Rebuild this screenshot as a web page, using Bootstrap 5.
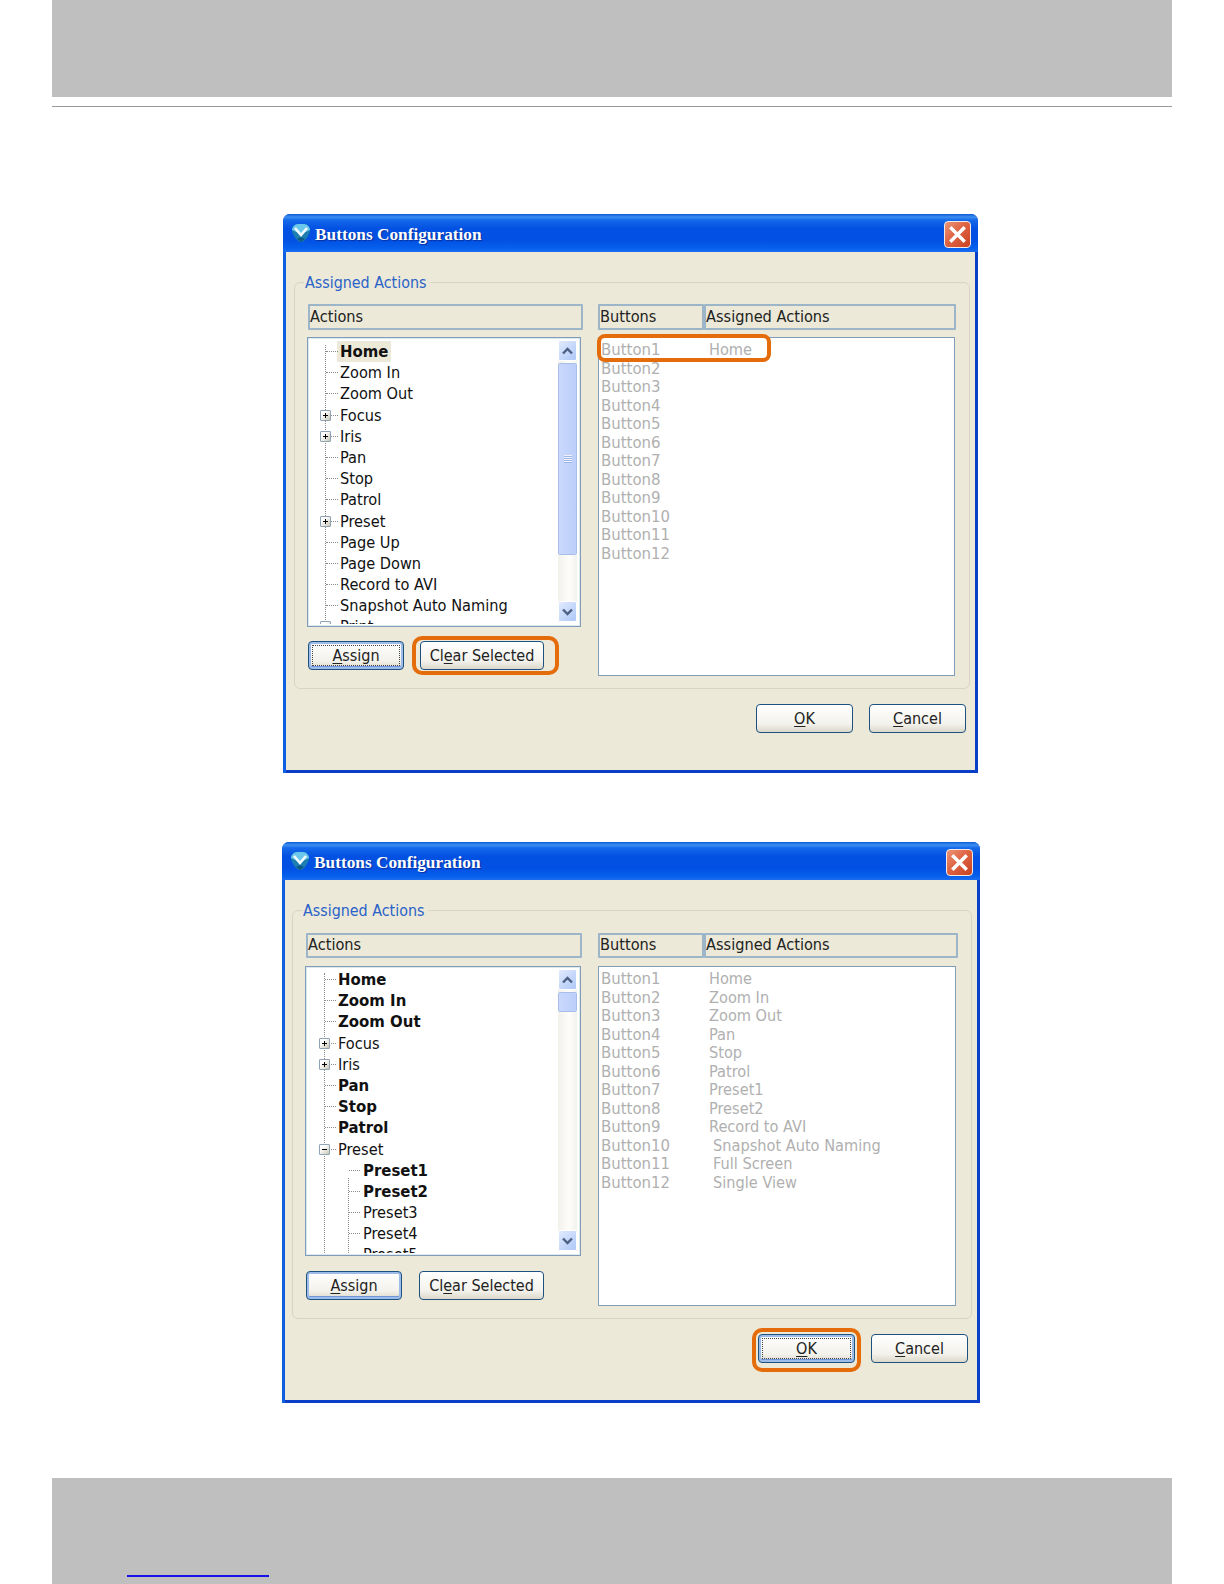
<!doctype html>
<html lang="en">
<head>
<meta charset="utf-8">
<title>Buttons Configuration</title>
<link rel="stylesheet" href="https://cdn.jsdelivr.net/npm/bootstrap@5.3.0/dist/css/bootstrap.min.css">
<style>
html,body{margin:0;background:#fff;}
body{width:1224px;height:1584px;overflow:hidden;font-family:"DejaVu Sans Condensed","DejaVu Sans",sans-serif;font-stretch:condensed;}
.graybar{background:#bfbfbf;width:1120px;margin-left:52px;}
.graytop{height:97px;}
.rule{height:1px;background:#999;width:1120px;margin:9px 0 0 52px;}
.grayfoot{height:106px;margin-top:75px;position:relative;}
.footlink{display:block;width:142px;height:2px;background:#1414e6;margin-left:75px;transform:translateY(97px);}
.xpwin{background:#ece9d8;border-radius:7px 7px 0 0;box-shadow:inset 3px 0 0 #0f5fe2,inset -3px 0 0 #0a3fc8,inset 0 -3px 0 #0a3ec6;}
.win-a{width:695px;height:559px;margin:107px 0 0 283px;--gl:11px;--gt:30px;--gw:676px;--pl:13px;--pt:21px;--lw:275px;--rw:358px;--cg:15px;--hh:26px;--hg:7px;--th:290px;--tw:274px;--tm:-1px;--lh:339px;--lw2:357px;--bw2:252px;--bm:14px;--cm:16px;}
.win-b{width:698px;height:561px;margin:69px 0 0 282px;--gl:10px;--gt:30px;--gw:680px;--pl:13px;--pt:22px;--lw:276px;--rw:360px;--cg:16px;--hh:25px;--hg:8px;--th:290px;--tw:276px;--tm:-1px;--lh:340px;--lw2:358px;--bw2:254px;--bm:15px;--cm:17px;}
.xptitle{height:38px;border-radius:7px 7px 0 0;background:linear-gradient(180deg,#0a5ad8 0,#3d8ff0 8%,#1469ea 16%,#0351e2 38%,#0251e4 70%,#0660ec 90%,#1c6df0 100%);padding:0 7px 0 7px;}
.xpname{font-family:"Liberation Serif",serif;font-stretch:normal;font-weight:700;font-size:17.3px;color:#fff;text-shadow:1px 1px 1px #0b2e9a;margin-left:3px;line-height:1;padding-top:4px;}
.xpclose{width:27px;height:27px;border:1px solid #f4ebe6;border-radius:4px;background:linear-gradient(135deg,#ec9678 0,#de6444 45%,#c9421f 100%);padding:0;margin-top:3px;}
.xpgroup{margin:var(--gt) 0 0 var(--gl);width:var(--gw);border:1px solid #d8d5c4;border-radius:6px;padding:var(--pt) 0 12px var(--pl);position:relative;}
.xplegend{position:absolute;left:9px;top:-10px;background:#ece9d8;padding:0 4px 0 1px;color:#2a62c8;font-size:15.9px;line-height:20px;}
.xpcols{display:grid;grid-template-columns:var(--lw) var(--rw);column-gap:var(--cg);}
.xphead{height:var(--hh);border:2px solid #9db5c9;border-radius:1px;background:#ece9d8;color:#222;font-size:16.2px;line-height:calc(var(--hh) - 5px);margin-bottom:var(--hg);}
.headtwo{display:grid;grid-template-columns:106px var(--bw2);}
.xptree{width:var(--tw);height:var(--th);margin-left:var(--tm);border:1px solid #7f9db9;box-shadow:inset 0 0 0 1px #dfe7ee;background:#fff;}
.treebody{padding-top:3px;padding-bottom:2px;}
.win-b .treebody{padding-top:2px;}
.treeclip{height:100%;position:relative;overflow:hidden;}
.vline{position:absolute;left:17px;top:4px;bottom:0;border-left:1px dotted #8a8a8a;}
.vline2{position:absolute;left:42px;top:209px;bottom:0;border-left:1px dotted #8a8a8a;}
.tnode{height:21.2px;line-height:21.2px;font-size:16.2px;color:#111;padding-left:32px;position:relative;white-space:nowrap;}
.win-b .tnode{padding-left:32px;}
.win-b .vline{left:18px;}
.tnode::before{content:"";position:absolute;left:18px;top:10px;width:12px;border-top:1px dotted #8a8a8a;}
.win-b .tnode::before{left:19px;width:11px;}
.win-b .tnode.tkid{padding-left:57px;}
.win-b .tnode.tkid::before{left:43px;width:11px;}
.tbold{font-weight:700;font-size:16.6px;}
.thome{display:inline-block;background:#ece9d8;padding:0 3px;margin-left:-3px;}
.texp{position:absolute;left:12px;top:5px;width:11px;height:11px;border:1px solid #8fa3b5;border-radius:1px;background:linear-gradient(135deg,#fff 30%,#c9c5b4 100%);z-index:1;}
.win-b .texp{left:13px;}
.texp::before{content:"";position:absolute;left:2px;top:4px;width:5px;height:1px;background:#000;}
.texp.tplus::after{content:"";position:absolute;left:4px;top:2px;width:1px;height:5px;background:#000;}
.xpscroll{width:19px;flex:0 0 19px;margin:2px 3px 4px 0;background:linear-gradient(90deg,#f3f1ec,#fdfdfb 60%,#f3f1ec);}
.sbtn{height:21px;flex:0 0 21px;border:1px solid #fff;border-radius:2px;background:linear-gradient(135deg,#e1eafe,#aec8f7);}
.sthumb{border:1px solid #fff;outline:1px solid #a8bde8;outline-offset:-1px;border-radius:2px;background:linear-gradient(90deg,#c9d8fc,#bccefa);}
.win-a .sthumb{height:192px;margin-top:2px;}
.win-b .sthumb{height:20px;margin-top:2px;}
.sgrip{width:8px;height:8px;background:repeating-linear-gradient(180deg,#eef3fe 0 1px,#9eb6e8 1px 2px);}
.xpbtns{margin-top:var(--bm);display:flex;}
.xpbtn{height:29px;padding:0;border:1px solid #1c5180;border-radius:4px;background:linear-gradient(180deg,#fff 0,#f3f2ec 70%,#dcd8ca 100%);color:#222;font-size:16px;line-height:25px;--bs-btn-padding-y:0;position:relative;}
.xpbtn:hover{background:linear-gradient(180deg,#fff 0,#f3f2ec 70%,#dcd8ca 100%);border-color:#1c5180;color:#222;}
.xpbtn u{text-underline-offset:2px;}
.bw-assign{width:96px;}
.bw-clear{width:124px;margin-left:var(--cm);}
.win-b .bw-clear{width:125px;}
.bw-ok{width:97px;}
.bw-cancel{width:97px;margin-left:16px;}
.bdefault{box-shadow:inset 0 0 0 2px #9ebce8,inset 0 -1px 0 2px #6f96dc;}
.bfocus::after{content:"";position:absolute;inset:3px;border:1px dotted #444;}
.xplist{width:var(--lw2);height:var(--lh);border:1px solid #7f9db9;background:#fff;padding:3px 0 0 2px;position:relative;}
.lrow{height:18.55px;line-height:18.55px;font-size:16.2px;color:#b0b0b0;white-space:nowrap;display:flex;}
.lkey{width:108px;font-size:16.6px;}
.lkey + .lshift{margin-left:4px;}
.oring{position:absolute;border:4.5px solid #e46c0a;border-radius:10px;pointer-events:none;}
.ring-clear{inset:-5px -15px -5px -8px;}
.ring-row{left:-2px;top:-4px;width:174px;height:28px;border-radius:8px;}
.ring-ok{inset:-6px -6px -9px -6px;}
.holder{display:inline-block;position:relative;line-height:0;}
.footrow{margin:15px 12px 0 0;}
</style>
</head>
<body>
<div class="graybar graytop"></div>
<div class="rule"></div>

<section class="xpwin win-a">
  <div class="xptitle d-flex align-items-center">
    <svg width="22" height="22" viewBox="0 0 22 22" aria-hidden="true"><path d="M2 8C2 5 5 2 8 2h6c3 0 6 3 6 6 0 4-5 12-9 12S2 12 2 8z" fill="#1d7fb0"/><path d="M2 8C2 5 5 2 8 2h6c3 0 6 3 6 6l-9 4z" fill="#6cc8ea"/><path d="M5 6l6 7 6-7" fill="none" stroke="#f2fbff" stroke-width="2.600"/><path d="M7 17l4 3 4-3-4-2z" fill="#0e5a86"/></svg>
    <span class="xpname">Buttons Configuration</span>
    <button class="xpclose ms-auto d-flex align-items-center justify-content-center" type="button" aria-label="Close"><svg width="19" height="19" viewBox="0 0 19 19"><path d="M3.500 3.500l12 12M15.500 3.500l-12 12" stroke="#fff" stroke-width="3.400" stroke-linecap="square"/></svg></button>
  </div>
  <div class="xpgroup">
    <span class="xplegend">Assigned Actions</span>
    <div class="xpcols">
      <div>
        <div class="xphead">Actions</div>
        <div class="xptree d-flex">
          <div class="flex-grow-1 treebody overflow-hidden">
            <div class="treeclip">
              <span class="vline"></span>
              <div class="tnode tbold"><span class="thome">Home</span></div>
              <div class="tnode">Zoom In</div>
              <div class="tnode">Zoom Out</div>
              <div class="tnode"><span class="texp tplus"></span>Focus</div>
              <div class="tnode"><span class="texp tplus"></span>Iris</div>
              <div class="tnode">Pan</div>
              <div class="tnode">Stop</div>
              <div class="tnode">Patrol</div>
              <div class="tnode"><span class="texp tplus"></span>Preset</div>
              <div class="tnode">Page Up</div>
              <div class="tnode">Page Down</div>
              <div class="tnode">Record to AVI</div>
              <div class="tnode">Snapshot Auto Naming</div>
              <div class="tnode"><span class="texp tplus"></span>Print</div>
            </div>
          </div>
          <div class="xpscroll d-flex flex-column">
            <div class="sbtn d-flex align-items-center justify-content-center"><svg width="13" height="10" viewBox="0 0 13 10"><path d="M2 7.5 6.500 3 11 7.500" fill="none" stroke="#4d6185" stroke-width="2.4"/></svg></div>
            <div class="sthumb d-flex align-items-center justify-content-center"><span class="sgrip"></span></div>
            <div class="sbtn d-flex align-items-center justify-content-center mt-auto"><svg width="13" height="10" viewBox="0 0 13 10"><path d="M2 2.500 6.500 7 11 2.500" fill="none" stroke="#4d6185" stroke-width="2.4"/></svg></div>
          </div>
        </div>
        <div class="xpbtns">
          <button class="btn xpbtn bw-assign bdefault bfocus" type="button"><u>A</u>ssign</button>
          <span class="holder bw-clear"><button class="btn xpbtn w-100" type="button">Cl<u>e</u>ar Selected</button><span class="oring ring-clear"></span></span>
        </div>
      </div>
      <div>
        <div class="headtwo"><div class="xphead">Buttons</div><div class="xphead">Assigned Actions</div></div>
        <div class="xplist">
          <span class="oring ring-row"></span>
          <div class="lrow"><span class="lkey">Button1</span><span>Home</span></div>
          <div class="lrow"><span class="lkey">Button2</span></div>
          <div class="lrow"><span class="lkey">Button3</span></div>
          <div class="lrow"><span class="lkey">Button4</span></div>
          <div class="lrow"><span class="lkey">Button5</span></div>
          <div class="lrow"><span class="lkey">Button6</span></div>
          <div class="lrow"><span class="lkey">Button7</span></div>
          <div class="lrow"><span class="lkey">Button8</span></div>
          <div class="lrow"><span class="lkey">Button9</span></div>
          <div class="lrow"><span class="lkey">Button10</span></div>
          <div class="lrow"><span class="lkey">Button11</span></div>
          <div class="lrow"><span class="lkey">Button12</span></div>
        </div>
      </div>
    </div>
  </div>
  <div class="footrow d-flex justify-content-end">
    <button class="btn xpbtn bw-ok" type="button"><u>O</u>K</button>
    <button class="btn xpbtn bw-cancel" type="button"><u>C</u>ancel</button>
  </div>
</section>

<section class="xpwin win-b">
  <div class="xptitle d-flex align-items-center">
    <svg width="22" height="22" viewBox="0 0 22 22" aria-hidden="true"><path d="M2 8C2 5 5 2 8 2h6c3 0 6 3 6 6 0 4-5 12-9 12S2 12 2 8z" fill="#1d7fb0"/><path d="M2 8C2 5 5 2 8 2h6c3 0 6 3 6 6l-9 4z" fill="#6cc8ea"/><path d="M5 6l6 7 6-7" fill="none" stroke="#f2fbff" stroke-width="2.600"/><path d="M7 17l4 3 4-3-4-2z" fill="#0e5a86"/></svg>
    <span class="xpname">Buttons Configuration</span>
    <button class="xpclose ms-auto d-flex align-items-center justify-content-center" type="button" aria-label="Close"><svg width="19" height="19" viewBox="0 0 19 19"><path d="M3.500 3.500l12 12M15.500 3.500l-12 12" stroke="#fff" stroke-width="3.400" stroke-linecap="square"/></svg></button>
  </div>
  <div class="xpgroup">
    <span class="xplegend">Assigned Actions</span>
    <div class="xpcols">
      <div>
        <div class="xphead">Actions</div>
        <div class="xptree d-flex">
          <div class="flex-grow-1 treebody overflow-hidden">
            <div class="treeclip">
              <span class="vline"></span>
              <span class="vline2"></span>
              <div class="tnode tbold">Home</div>
              <div class="tnode tbold">Zoom In</div>
              <div class="tnode tbold">Zoom Out</div>
              <div class="tnode"><span class="texp tplus"></span>Focus</div>
              <div class="tnode"><span class="texp tplus"></span>Iris</div>
              <div class="tnode tbold">Pan</div>
              <div class="tnode tbold">Stop</div>
              <div class="tnode tbold">Patrol</div>
              <div class="tnode"><span class="texp"></span>Preset</div>
              <div class="tnode tkid tbold">Preset1</div>
              <div class="tnode tkid tbold">Preset2</div>
              <div class="tnode tkid">Preset3</div>
              <div class="tnode tkid">Preset4</div>
              <div class="tnode tkid">Preset5</div>
            </div>
          </div>
          <div class="xpscroll d-flex flex-column">
            <div class="sbtn d-flex align-items-center justify-content-center"><svg width="13" height="10" viewBox="0 0 13 10"><path d="M2 7.5 6.500 3 11 7.500" fill="none" stroke="#4d6185" stroke-width="2.4"/></svg></div>
            <div class="sthumb"></div>
            <div class="sbtn d-flex align-items-center justify-content-center mt-auto"><svg width="13" height="10" viewBox="0 0 13 10"><path d="M2 2.500 6.500 7 11 2.500" fill="none" stroke="#4d6185" stroke-width="2.4"/></svg></div>
          </div>
        </div>
        <div class="xpbtns">
          <button class="btn xpbtn bw-assign bdefault" type="button"><u>A</u>ssign</button>
          <span class="holder bw-clear"><button class="btn xpbtn w-100" type="button">Cl<u>e</u>ar Selected</button></span>
        </div>
      </div>
      <div>
        <div class="headtwo"><div class="xphead">Buttons</div><div class="xphead">Assigned Actions</div></div>
        <div class="xplist">
          <div class="lrow"><span class="lkey">Button1</span><span>Home</span></div>
          <div class="lrow"><span class="lkey">Button2</span><span>Zoom In</span></div>
          <div class="lrow"><span class="lkey">Button3</span><span>Zoom Out</span></div>
          <div class="lrow"><span class="lkey">Button4</span><span>Pan</span></div>
          <div class="lrow"><span class="lkey">Button5</span><span>Stop</span></div>
          <div class="lrow"><span class="lkey">Button6</span><span>Patrol</span></div>
          <div class="lrow"><span class="lkey">Button7</span><span>Preset1</span></div>
          <div class="lrow"><span class="lkey">Button8</span><span>Preset2</span></div>
          <div class="lrow"><span class="lkey">Button9</span><span>Record to AVI</span></div>
          <div class="lrow"><span class="lkey">Button10</span><span class="lshift">Snapshot Auto Naming</span></div>
          <div class="lrow"><span class="lkey">Button11</span><span class="lshift">Full Screen</span></div>
          <div class="lrow"><span class="lkey">Button12</span><span class="lshift">Single View</span></div>
        </div>
      </div>
    </div>
  </div>
  <div class="footrow d-flex justify-content-end">
    <span class="holder bw-ok"><button class="btn xpbtn w-100 bdefault bfocus" type="button"><u>O</u>K</button><span class="oring ring-ok"></span></span>
    <button class="btn xpbtn bw-cancel" type="button"><u>C</u>ancel</button>
  </div>
</section>

<div class="graybar grayfoot"><span class="footlink"></span></div>
<script src="https://cdn.jsdelivr.net/npm/bootstrap@5.3.0/dist/js/bootstrap.bundle.min.js"></script>
</body>
</html>
